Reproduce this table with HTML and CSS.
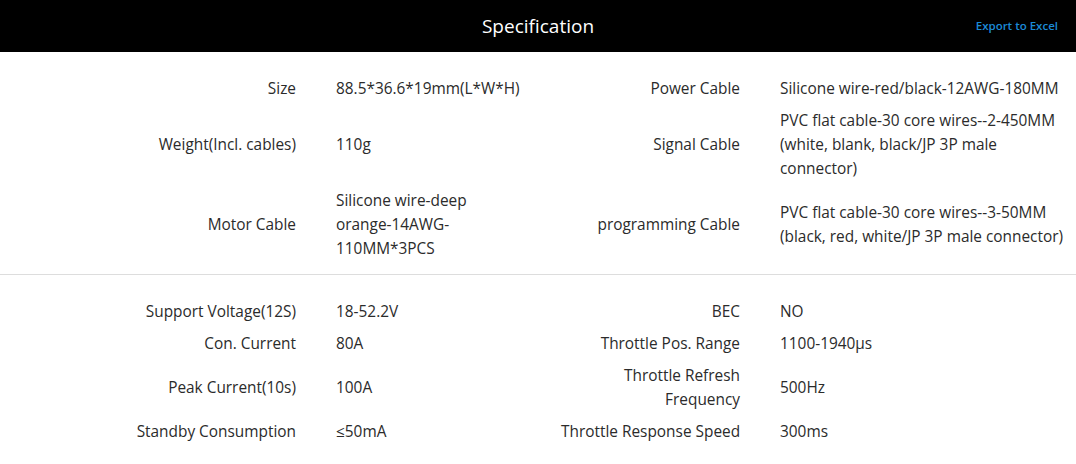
FILE: index.html
```html
<!DOCTYPE html>
<html>
<head>
<meta charset="utf-8">
<link rel="stylesheet" href="styles.css">
</head>
<body>
<div class="spec">
  <div class="spec-head">
    <h2 class="spec-title">Specification</h2>
    <a class="export" href="#">Export to Excel</a>
  </div>
  <div class="section section-first">
    <div class="row">
      <div class="label">Size</div>
      <div class="value">88.5*36.6*19mm(L*W*H)</div>
      <div class="label">Power Cable</div>
      <div class="value">Silicone wire-red/black-12AWG-180MM</div>
    </div>
    <div class="row">
      <div class="label">Weight(Incl. cables)</div>
      <div class="value">110g</div>
      <div class="label">Signal Cable</div>
      <div class="value">PVC flat cable-30 core wires--2-450MM<br>(white, blank, black/JP 3P male<br>connector)</div>
    </div>
    <div class="row">
      <div class="label">Motor Cable</div>
      <div class="value">Silicone wire-deep<br>orange-14AWG-<br>110MM*3PCS</div>
      <div class="label">programming Cable</div>
      <div class="value">PVC flat cable-30 core wires--3-50MM<br>(black, red, white/JP 3P male connector)</div>
    </div>
  </div>
  <div class="section">
    <div class="row">
      <div class="label">Support Voltage(12S)</div>
      <div class="value">18-52.2V</div>
      <div class="label">BEC</div>
      <div class="value">NO</div>
    </div>
    <div class="row">
      <div class="label">Con. Current</div>
      <div class="value">80A</div>
      <div class="label">Throttle Pos. Range</div>
      <div class="value">1100-1940μs</div>
    </div>
    <div class="row">
      <div class="label">Peak Current(10s)</div>
      <div class="value">100A</div>
      <div class="label">Throttle Refresh<br>Frequency</div>
      <div class="value">500Hz</div>
    </div>
    <div class="row">
      <div class="label">Standby Consumption</div>
      <div class="value">≤50mA</div>
      <div class="label">Throttle Response Speed</div>
      <div class="value">300ms</div>
    </div>
  </div>
</div>
</body>
</html>
```
FILE: styles.css
```css
html, body {
  margin: 0;
  padding: 0;
  background: #fff;
}
body {
  font-family: "Open Sans", "Noto Sans", sans-serif;
  color: #2b2b2b;
  width: 1076px;
  height: 464px;
  overflow: hidden;
}
.spec-head {
  position: relative;
  height: 52px;
  background: #000;
  display: flex;
  align-items: center;
  justify-content: center;
}
.spec-title {
  margin: 0;
  font-size: 19px;
  font-weight: 400;
  color: #fff;
  line-height: 52px;
}
.export {
  position: absolute;
  right: 18px;
  top: 17px;
  font-size: 11.5px;
  font-weight: 600;
  color: #1c8ad6;
  text-decoration: none;
  line-height: 18px;
}
.section {
  padding: 21px 0 16px;
}
.section-first {
  padding: 21px 0 9px;
  border-bottom: 1px solid #ddd;
}
.row {
  display: grid;
  grid-template-columns: 296px 185px 179px 1fr;
  column-gap: 40px;
  align-items: center;
  padding: 4px 0;
  font-size: 15.4px;
  line-height: 24px;
}
.label {
  text-align: right;
  white-space: nowrap;
}
.value {
  text-align: left;
  white-space: nowrap;
}
```
